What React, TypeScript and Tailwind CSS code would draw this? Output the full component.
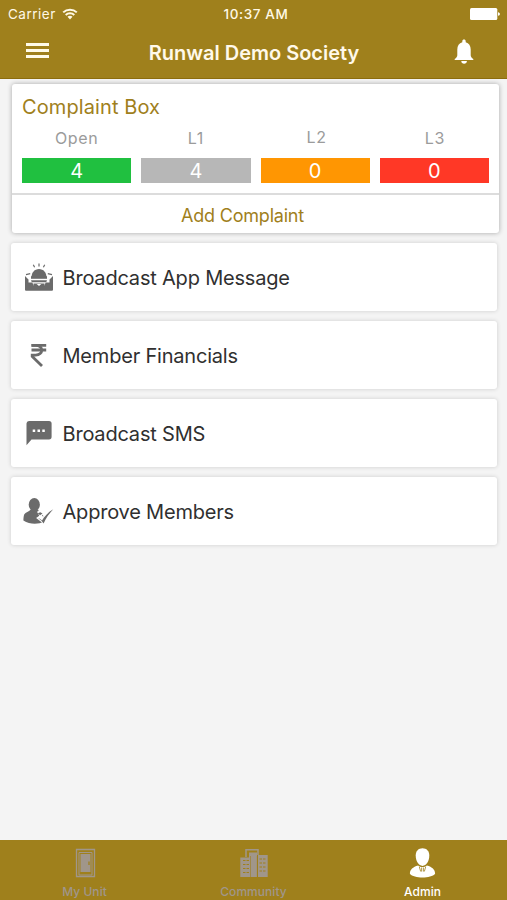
import type { ReactNode } from "react";

interface Stat {
  label: string;
  count: number;
  color: string;
  labelClass: string;
}

const stats: Stat[] = [
  { label: "Open", count: 4, color: "bg-[#20c040]", labelClass: "pt-px" },
  { label: "L1", count: 4, color: "bg-[#b7b7b7]", labelClass: "pt-px" },
  { label: "L2", count: 0, color: "bg-[#ff9602]", labelClass: "pl-[3px]" },
  { label: "L3", count: 0, color: "bg-[#ff3826]", labelClass: "pt-px pl-px" },
];

function WifiIcon() {
  return (
    <svg className="h-[12px] w-[16px]" viewBox="0 0 16 12" fill="none" stroke="currentColor" strokeWidth="2">
      <path d="M1.2 4.4C5 0.7 11 0.7 14.8 4.4" />
      <path d="M3.7 7C6.1 4.7 9.9 4.7 12.3 7" />
      <path d="M8 11.4 5.5 8.7C6.9 7.4 9.1 7.4 10.5 8.7Z" fill="currentColor" stroke="none" />
    </svg>
  );
}

function BatteryIcon() {
  return (
    <svg className="h-[12px] w-[30px]" viewBox="0 0 30 12" fill="currentColor">
      <rect width="27.3" height="12" rx="1.5" />
      <path d="M28 4.2c2.6.3 2.6 3.3 0 3.6Z" />
    </svg>
  );
}

function BellIcon() {
  return (
    <svg className="h-[26px] w-[20px]" viewBox="0 0 20 26" fill="currentColor">
      <path d="M10 .6c1 0 1.7.7 1.7 1.7v.9c3.2.8 5 3.6 5 7.2v5.8c0 1.5 1 2.7 2.6 3.8v1H.7v-1c1.6-1.1 2.6-2.3 2.6-3.8v-5.8c0-3.6 1.8-6.4 5-7.2v-.9C8.3 1.3 9 .6 10 .6Z" />
      <path d="M7.3 22h5.6c0 1.7-1.2 2.7-2.8 2.7S7.3 23.7 7.3 22Z" />
    </svg>
  );
}

function BroadcastIcon() {
  return (
    <svg className="h-[30px] w-[30px]" viewBox="0 0 30 30" fill="#6b6b6b">
      <path d="M1 14 4.5 17.5v3h3.8l1.5 3.2h10.4l1.5-3.2h3.8v-3L29 14v13.8a1 1 0 0 1-1 1H2a1 1 0 0 1-1-1Z" />
      <path d="M7.5 15.5C7.5 10.5 10.5 7 15 7s7.5 3.5 7.5 8.5Z" />
      <path d="M7 14.2h16v2.6H7Z" />
      <path d="M7 18.2h16l-.8 2H7.8Z" />
      <path d="M9.5 21.5h11v3h-11Z" />
      <path d="M12.7 22h4.6L15 24Z" fill="#fff" />
      <path d="M15 1.6v3M9.3 2.8l1.3 2.4M20.7 2.8l-1.3 2.4" stroke="#6b6b6b" strokeWidth="1.2" fill="none" />
      <path d="m2 12.6 4.2-.9M28 12.6l-4.2-.9" stroke="#6b6b6b" strokeWidth="1.2" />
    </svg>
  );
}

function RupeeIcon() {
  return (
    <svg className="h-[30px] w-[30px]" viewBox="0 0 30 30" fill="none" stroke="#6b6b6b" strokeWidth="2.8">
      <path d="M7.5 5.3h14.7M7.5 10h14.7" />
      <path d="M7.5 5.3h4.2c8 0 8 9.8 0 9.8H8.2v1.3l9.8 9.6" />
    </svg>
  );
}

function SmsIcon() {
  return (
    <svg className="h-[30px] w-[30px]" viewBox="0 0 30 30" fill="#6b6b6b">
      <path d="M5 3h20a2.6 2.6 0 0 1 2.6 2.6v13.2a2.6 2.6 0 0 1-2.6 2.6H7.5L2.5 27.3V5.6A2.6 2.6 0 0 1 5 3Z" />
      <path d="M8.7 11.5h2.5V14H8.7zM13.5 11.5H16V14h-2.5zM18.3 11.5h2.5V14h-2.5z" fill="#fff" />
    </svg>
  );
}

function ApproveIcon() {
  return (
    <svg className="h-[30px] w-[30px] overflow-visible" viewBox="0 0 30 30" fill="#6b6b6b">
      <ellipse cx="10.3" cy="8.7" rx="5.6" ry="6.6" />
      <path d="M6.5 13.8c-1.5 2-5 2.3-6.2 4.5-.6 1.5-.9 3.7-.9 6.2 3.5 2.5 7.5 3.2 11.300 3.200 3.500 0 6.800-.7 8.800-1.900l-.4-6.500c-.6-2.800-4-3.500-5.200-5.500Z" />
      <path d="m13 15.800 3-1.500 4.500 3.200-2.500 2 3.500 3.700 5-4-4.200 8.800-4.300-1.400-5.900-4.600 3.200-2.200Z" fill="#fff" />
      <path d="m13.800 17.200 2.500-.9 2.200 1.300-2.500 1.700Z" />
      <path d="M14 22c1.500.5 3 1.200 4 2.500 2.400-4 5.700-8 11.200-11.300-4.200 4.500-7.400 9-9.600 14.300-1.300-2.200-3.200-4.100-5.600-5.500Z" />
    </svg>
  );
}

function DoorIcon() {
  return (
    <svg className="h-[30px] w-[30px]" viewBox="0 0 30 30" fill="none" stroke="currentColor">
      <path d="M6.5 28.5v-27h18v27Z" strokeWidth="1.3" />
      <path d="M9 27V4.5h13V27Z" strokeWidth="1" />
      <path d="M10.5 6h10v18h-10Z" fill="currentColor" stroke="none" />
      <path d="M19 13.5V17" stroke="#9f801c" strokeWidth="1.3" />
    </svg>
  );
}

function BuildingsIcon() {
  return (
    <svg className="h-[30px] w-[30px]" viewBox="0 0 30 30" fill="none" stroke="currentColor">
      <path d="M7 9V1.7h12V7" strokeWidth="1.5" />
      <path d="M10 9V4.5h8V29h-8Z" fill="currentColor" stroke="none" />
      <path d="M1.3 9.5h9V29h-9ZM19 7h9.7v22H19Z" fill="currentColor" stroke="none" />
      <path d="M4 12.5h6M4 16.5h6M4 20.5h6M4 24.5h6M20.5 11h6M20.5 15h6M20.5 19h6M20.5 23h6" stroke="#9f801c" strokeWidth="1.2" strokeDasharray="2.5 1" />
      <path d="M11.5 8v21M18.3 8v21" stroke="#9f801c" strokeWidth=".6" />
    </svg>
  );
}

function AdminIcon() {
  return (
    <svg className="h-[30px] w-[30px]" viewBox="0 0 30 30" fill="currentColor">
      <path d="M14.500.3c4 0 6.8 2.7 6.8 7.3 0 5.7-3 10.3-6.8 10.3S7.7 13.3 7.7 7.6C7.7 3 10.5.3 14.5.3Z" />
      <path d="M10.1 17.5c2.5 2 6.3 2 8.8 0 5.2 1.5 8.2 4 8.2 8.2-4.1 5.1-21.1 5.1-25.2 0 0-4.2 3-6.7 8.2-8.2Z" />
      <path d="m11.3 18.8 1.4 4.7M17.7 18.8l-1.4 4.7M13.6 19.5v4M15.4 19.5v4" stroke="#9f801c" strokeWidth=".8" />
    </svg>
  );
}

function MenuRow({ icon, label }: { icon: ReactNode; label: string }) {
  return (
    <button className="flex h-[68.3px] w-full items-center gap-[8.5px] rounded-[3px] bg-white pl-[13px] text-left shadow-[0_0_4px_rgba(0,0,0,0.16)]">
      {icon}
      <span className="pt-[2px] text-[20px] leading-7 tracking-[-0.2px] text-[#303030]">{label}</span>
    </button>
  );
}

function Tab({ icon, label, active }: { icon: ReactNode; label: string; active?: boolean }) {
  return (
    <button className={`flex flex-1 flex-col items-center pt-2 ${active ? "text-white" : "text-[#a0968a]"}`}>
      {icon}
      <span className="mt-[6px] text-[12px] leading-4 font-medium tracking-[0.05px]">{label}</span>
    </button>
  );
}

export default function App() {
  return (
    <div className="flex h-[900px] w-[507px] flex-col overflow-hidden bg-[#f4f4f4] font-['Inter',sans-serif]">
      <header className="h-[79px] shrink-0 border-b border-[#8c6d0d] bg-[#9f801c] text-white">
        {/* Status bar */}
        <div className="grid h-[27px] grid-cols-3 items-center pr-[7px] pl-2 text-[#fff9e6]">
          <div className="flex items-center gap-[6px]">
            <span className="pt-px text-[13.5px] tracking-[0.5px]">Carrier</span>
            <WifiIcon />
          </div>
          <span className="pt-px pl-[4px] text-center text-[13.5px] font-medium tracking-[0.6px]">10:37 AM</span>
          <div className="flex justify-end text-white">
            <BatteryIcon />
          </div>
        </div>

        <div className="flex h-[50px] items-center justify-between pr-[33px] pl-[26px]">
          <button className="mb-[3px] flex w-[23px] flex-col gap-[3px]">
            <span className="h-[3px] bg-[#fffbe9]" />
            <span className="h-[3px] bg-[#fffbe9]" />
            <span className="h-[3px] bg-[#fffbe9]" />
          </button>
          <h1 className="pt-px pl-[5px] text-[20px] font-semibold text-[#fff9ea]">Runwal Demo Society</h1>
          <button>
            <BellIcon />
          </button>
        </div>
      </header>

      <main className="flex flex-1 flex-col gap-[9.8px] pt-[5px] pr-[10px] pl-[11px]">
        {/* Complaint box */}
        <section className="-mr-[2px] ml-px h-[149px] shrink-0 rounded-[3px] bg-white shadow-[0_0_5px_rgba(0,0,0,0.32)]">
          <div className="h-[109px] px-[10px] pt-[9px]">
            <h2 className="text-[20px] leading-7 tracking-[0.1px] text-[#9f801c]">Complaint Box</h2>
            <div className="mt-[6px] grid grid-cols-4 gap-[10px]">
              {stats.map((stat) => (
                <div key={stat.label} className="text-center">
                  <div className={`h-[22px] text-[16px] leading-[20px] tracking-[0.6px] text-[#9b9b9b] ${stat.labelClass}`}>
                    {stat.label}
                  </div>
                  <div className={`mt-[9px] h-[25px] text-[20px] leading-[26px] text-white ${stat.color}`}>{stat.count}</div>
                </div>
              ))}
            </div>
          </div>
          <button className="flex h-[40px] w-full items-center justify-center border-t-2 border-[#dcdcdc] pt-[2px] pr-[26px] text-[18px] tracking-[-0.2px] text-[#9f801c]">
            Add Complaint
          </button>
        </section>

        <MenuRow icon={<BroadcastIcon />} label="Broadcast App Message" />
        <MenuRow icon={<RupeeIcon />} label="Member Financials" />
        <MenuRow icon={<SmsIcon />} label="Broadcast SMS" />
        <MenuRow icon={<ApproveIcon />} label="Approve Members" />
      </main>

      <nav className="flex h-[60px] shrink-0 bg-[#9f801c]">
        <Tab icon={<DoorIcon />} label="My Unit" />
        <Tab icon={<BuildingsIcon />} label="Community" />
        <Tab icon={<AdminIcon />} label="Admin" active />
      </nav>
    </div>
  );
}
